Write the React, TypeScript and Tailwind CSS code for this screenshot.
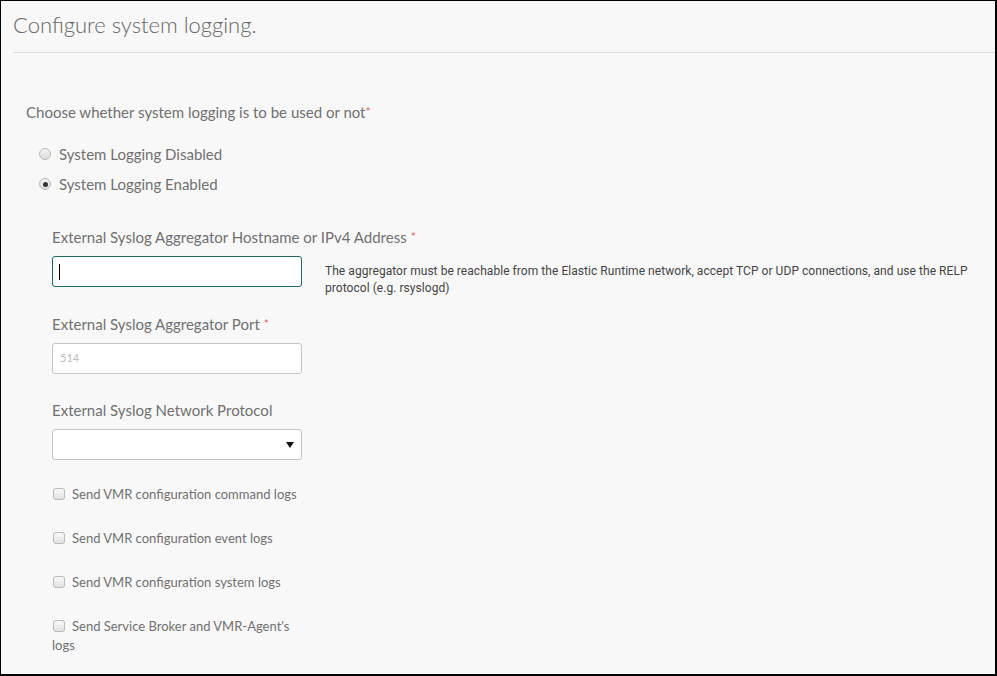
import React from "react";

const font = { fontFamily: "Lato, 'Open Sans', sans-serif" };

const Radio = ({ label, checked }: { label: string; checked?: boolean }) => (
  <label className="flex items-center h-[30px] text-[15px] text-[#707070]">
    <span className="w-[12px] h-[12px] rounded-full border border-[#b8b8b8] bg-gradient-to-b from-[#f4f4f4] to-[#dcdcdc] flex items-center justify-center mr-[8px]">
      {checked && <span className="w-[5px] h-[5px] rounded-full bg-[#333]" />}
    </span>
    {label}
  </label>
);

const Check = ({ label }: { label: string }) => (
  <div className="w-[250px] text-[13px] leading-[19px] text-[#707070] mb-[25px]">
    <span className="inline-block align-[-1px] w-[12px] h-[12px] rounded-[3px] border border-[#b8b8b8] bg-gradient-to-b from-[#fafafa] to-[#e2e2e2] ml-[1px] mr-[7px]" />
    {label}
  </div>
);

const Label = ({ text, req }: { text: string; req?: boolean }) => (
  <div className="text-[15px] text-[#707070] leading-[20px] mb-[9px]">
    {text}
    {req && <span className="text-[#e55] text-[12px] align-top ml-[4px]">*</span>}
  </div>
);

export default function App() {
  return (
    <div
      style={font}
      className="w-[997px] h-[676px] bg-[#f8f8f8] border-t border-l border-r-2 border-b-2 border-black overflow-hidden"
    >
      <div className="pt-[9px] h-[52px] border-b border-[#dedede] ml-[12px]">
        <h1 className="text-[22px] font-light text-[#666] leading-[30px]">Configure system logging.</h1>
      </div>
      <div className="pl-[25px] pt-[49px]">
        <div className="text-[15px] text-[#707070] leading-[20px]">
          Choose whether system logging is to be used or not
          <span className="text-[#e55] text-[12px] align-top">*</span>
        </div>
        <div className="pl-[13px] pt-[17px]">
          <Radio label="System Logging Disabled" />
          <Radio label="System Logging Enabled" checked />
        </div>
        <div className="pl-[26px] pt-[28px]">
          <Label text="External Syslog Aggregator Hostname or IPv4 Address" req />
          <div className="flex items-start mt-[1px]">
            <div className="w-[250px] h-[31px] bg-white border border-[#1d6b60] rounded-[3px] flex items-center pl-[6px]">
              <span className="w-[1px] h-[16px] bg-black" />
            </div>
            <p className="ml-[23px] mt-[7px] text-[12px] leading-[17px] text-[#444] w-[660px] tracking-[0.05px]" style={{ fontFamily: "Roboto, sans-serif" }}>
              The aggregator must be reachable from the Elastic Runtime network, accept TCP or UDP connections, and use the RELP protocol (e.g. rsyslogd)
            </p>
          </div>
          <div className="pt-[17px]">
            <Label text="External Syslog Aggregator Port" req />
            <div className="w-[250px] h-[31px] bg-white border border-[#c4c4c4] rounded-[3px] flex items-center pl-[7px] text-[11px] text-[#bbb]">
              514
            </div>
          </div>
          <div className="pt-[26px]">
            <Label text="External Syslog Network Protocol" />
            <div className="w-[250px] h-[31px] bg-white border border-[#c4c4c4] rounded-[3px] flex items-center justify-end pr-[7px]">
              <svg width="8" height="6" viewBox="0 0 8 6">
                <path d="M0 0h8L4 6z" fill="#111" />
              </svg>
            </div>
          </div>
          <div className="pt-[25px]">
            <Check label="Send VMR configuration command logs" />
            <Check label="Send VMR configuration event logs" />
            <Check label="Send VMR configuration system logs" />
            <Check label="Send Service Broker and VMR-Agent's logs" />
          </div>
        </div>
      </div>
    </div>
  );
}
